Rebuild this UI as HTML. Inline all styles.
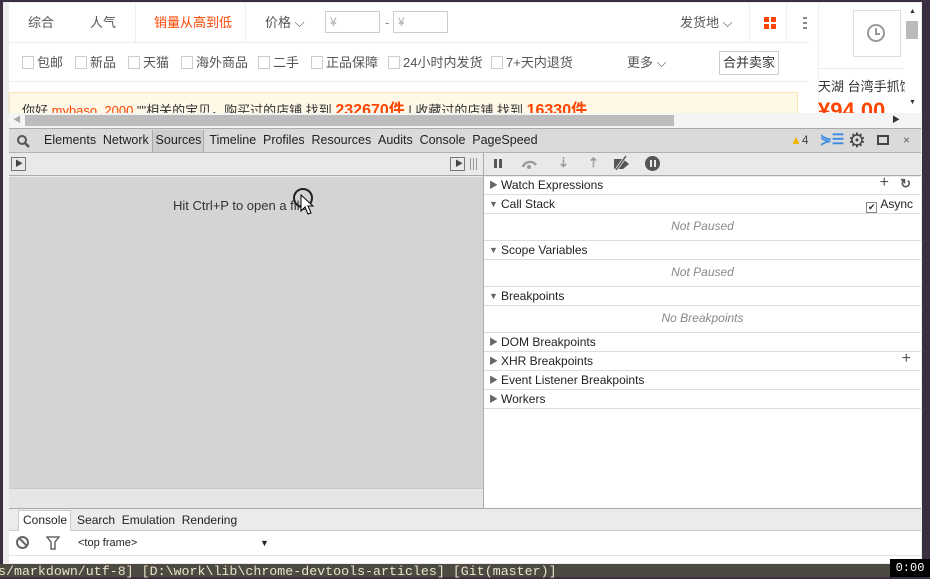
<!DOCTYPE html>
<html><head><meta charset="utf-8"><style>
*{box-sizing:border-box;margin:0;padding:0}
body{width:930px;height:577px;overflow:hidden;background:#3a2f40;font-family:"Liberation Sans","Noto Sans CJK SC",sans-serif;font-size:12px;color:#222;position:relative}
.a{position:absolute}
.win{left:3px;top:2px;width:919px;height:562px;background:#ececec}
.cn{font-family:"Liberation Sans","Noto Sans CJK SC",sans-serif}
.cb{display:inline-block;width:12px;height:13px;border:1px solid #ccc;background:#fff;vertical-align:-2px;margin-right:3px}
.row{position:absolute;left:484px;width:437px;height:19px;border-bottom:1px solid #ddd;font-size:12px;line-height:18px;padding-left:17px;color:#222}
.tri{position:absolute;left:5px;top:0;font-size:9px;color:#666}
.np{position:absolute;left:484px;width:437px;height:27px;border-bottom:1px solid #ddd;text-align:center;font-style:italic;color:#888;line-height:25px}
.dt span{margin-right:6.8px}
</style></head><body>
<div class="a win"></div>
<!-- page area -->
<div class="a" style="left:9px;top:3px;width:912px;height:125px;background:#fff"></div>
<div class="a cn" style="left:9px;top:3px;width:800px;height:40px;border-bottom:1px solid #eee;font-size:13px;line-height:39px;color:#555">
 <span class="a" style="left:19px">综合</span><span class="a" style="left:81px">人气</span>
 <span class="a" style="left:126px;width:1px;height:40px;background:#eee"></span>
 <span class="a" style="left:145px;color:#f40">销量从高到低</span>
 <span class="a" style="left:236px;width:1px;height:40px;background:#eee"></span>
 <span class="a" style="left:256px">价格 ⌵</span>
 <span class="a" style="left:316px;top:8px;width:55px;height:22px;border:1px solid #ccc;line-height:20px;padding-left:4px;color:#aaa;font-size:12px">¥</span>
 <span class="a" style="left:376px;color:#888">-</span>
 <span class="a" style="left:384px;top:8px;width:55px;height:22px;border:1px solid #ccc;line-height:20px;padding-left:4px;color:#aaa;font-size:12px">¥</span>
 <span class="a" style="left:671px">发货地 ⌵</span>
 <span class="a" style="left:740px;width:1px;height:40px;background:#eee"></span>
 <span class="a" style="left:755px;top:14px;width:12px;height:12px;background:
 linear-gradient(#f40,#f40) 0 0/5px 5px no-repeat,linear-gradient(#f40,#f40) 7px 0/5px 5px no-repeat,linear-gradient(#f40,#f40) 0 7px/5px 5px no-repeat,linear-gradient(#f40,#f40) 7px 7px/5px 5px no-repeat"></span>
 <span class="a" style="left:777px;width:1px;height:40px;background:#eee"></span>
 <span class="a" style="left:794px;top:14px;width:4px;height:12px;background:repeating-linear-gradient(#888 0 2px,transparent 2px 5px)"></span>
</div>
<div class="a cn" style="left:9px;top:44px;width:800px;height:38px;border-bottom:1px solid #eee;font-size:13px;line-height:38px;color:#555">
 <span class="a" style="left:13px"><i class="cb"></i>包邮</span>
 <span class="a" style="left:66px"><i class="cb"></i>新品</span>
 <span class="a" style="left:119px"><i class="cb"></i>天猫</span>
 <span class="a" style="left:172px"><i class="cb"></i>海外商品</span>
 <span class="a" style="left:249px"><i class="cb"></i>二手</span>
 <span class="a" style="left:302px"><i class="cb"></i>正品保障</span>
 <span class="a" style="left:379px"><i class="cb"></i>24小时内发货</span>
 <span class="a" style="left:482px"><i class="cb"></i>7+天内退货</span>
 <span class="a" style="left:618px">更多 ⌵</span>
 <span class="a" style="left:710px;top:7px;width:60px;height:24px;border:1px solid #ccc;line-height:22px;text-align:center;color:#333">合并卖家</span>
</div>
<div class="a cn" style="left:9px;top:92px;width:789px;height:22px;background:#fff8e6;border:1px solid #fde3b4;overflow:hidden;font-size:13px;line-height:36px;padding-left:12px;color:#333;white-space:nowrap">你好 <span style="color:#f40">mybaso_2000</span> ""相关的宝贝，购买过的店铺 找到 <b style="color:#f40;font-size:16px">232670件</b> | 收藏过的店铺 找到 <b style="color:#f40;font-size:16px">16330件</b></div>
<!-- right sidebar -->
<div class="a" style="left:818px;top:3px;width:1px;height:120px;background:#eee"></div>
<div class="a" style="left:819px;top:68px;width:85px;height:1px;background:#eee"></div>
<div class="a" style="left:853px;top:10px;width:48px;height:47px;border:1px solid #ddd"></div>
<div class="a" style="left:867px;top:24px;width:18px;height:18px;border:2px solid #999;border-radius:50%"></div>
<div class="a" style="left:875px;top:28px;width:2px;height:6px;background:#999"></div>
<div class="a" style="left:875px;top:33px;width:5px;height:2px;background:#999"></div>
<div class="a cn" style="left:818px;top:76px;width:87px;overflow:hidden;font-size:13px;color:#333;white-space:nowrap">天湖 台湾手抓饼</div>
<div class="a" style="left:818px;top:98px;width:80px;height:15px;overflow:hidden;font-size:22px;font-weight:bold;color:#f40;line-height:26px">¥94.00</div>
<div class="a" style="left:905px;top:3px;width:16px;height:110px;background:#fff"></div>
<div class="a" style="left:909px;top:8px;font-size:7px;color:#333">▲</div>
<div class="a" style="left:906px;top:21px;width:12px;height:18px;background:#bbb"></div>
<div class="a" style="left:909px;top:99px;font-size:7px;color:#333">▼</div>
<!-- h scrollbar -->
<div class="a" style="left:9px;top:113px;width:912px;height:15px;background:#f4f4f4"></div>
<div class="a" style="left:25px;top:115px;width:649px;height:11px;background:#bcbcbc"></div>
<div class="a" style="left:13px;top:114px;font-size:8px;color:#aaa">◀</div>
<div class="a" style="left:892px;top:114px;font-size:8px;color:#333">▶</div>
<!-- devtools toolbar -->
<div class="a" style="left:9px;top:128px;width:912px;height:25px;background:#dadada;border-top:1px solid #aaa;border-bottom:1px solid #b3b3b3"></div>
<svg class="a" style="left:16px;top:134px" width="15" height="15"><circle cx="6" cy="6" r="4" fill="none" stroke="#555" stroke-width="2"/><path d="M9 9l4 4" stroke="#555" stroke-width="2.5"/></svg>
<div class="a" style="left:152px;top:130px;width:52px;height:22px;background:#cdcdcd;border-left:1px solid #aaa;border-right:1px solid #aaa"></div>
<div class="a dt" style="left:44px;top:133px;font-size:12.5px;color:#222;white-space:nowrap"><span>Elements</span><span>Network</span><span style="margin-right:8px">Sources</span><span>Timeline</span><span>Profiles</span><span>Resources</span><span>Audits</span><span>Console</span><span>PageSpeed</span></div>
<div class="a" style="left:790px;top:133px;font-size:12px;color:#444"><span style="color:#f0b400">▲</span>4</div>
<div class="a" style="left:820px;top:131px;font-size:14px;color:#3a8be0;font-weight:bold">⋟☰</div>
<div class="a" style="left:848px;top:128px;font-size:20px;color:#444">⚙</div>
<div class="a" style="left:877px;top:135px;width:12px;height:10px;border:2px solid #444"></div>
<div class="a" style="left:903px;top:133px;font-size:12px;color:#666">×</div>
<!-- second row -->
<div class="a" style="left:9px;top:153px;width:912px;height:23px;background:#e9e9e9;border-bottom:1px solid #aaa"></div>
<div class="a" style="left:483px;top:153px;width:1px;height:356px;background:#aaa"></div>
<div class="a" style="left:11px;top:157px;width:15px;height:14px;border:1px solid #777;font-size:8px;line-height:12px;padding-left:3px;color:#444">▶</div>
<div class="a" style="left:450px;top:157px;width:15px;height:14px;border:1px solid #777;font-size:8px;line-height:12px;padding-left:4px;color:#444">▶</div>
<div class="a" style="left:470px;top:158px;width:7px;height:12px;background:repeating-linear-gradient(90deg,#999 0 1px,transparent 1px 3px)"></div>
<div class="a" style="left:494px;top:159px;width:3px;height:9px;background:#555"></div><div class="a" style="left:499px;top:159px;width:3px;height:9px;background:#555"></div>
<svg class="a" style="left:520px;top:156px" width="20" height="14"><path d="M3 11a7 6 0 0 1 13-2" fill="none" stroke="#999" stroke-width="2.5"/><circle cx="9" cy="11" r="2" fill="#999"/></svg>
<div class="a" style="left:558px;top:155px;font-size:13px;color:#999;font-weight:bold">⇣</div>
<div class="a" style="left:588px;top:155px;font-size:13px;color:#999;font-weight:bold">⇡</div>
<svg class="a" style="left:612px;top:155px" width="20" height="16"><path d="M2 4h9l6 5-6 5H2z" fill="#555"/><path d="M4 15L14 1" stroke="#e9e9e9" stroke-width="3"/><path d="M4 15L14 1" stroke="#555" stroke-width="1.5"/></svg>
<div class="a" style="left:645px;top:156px;width:15px;height:15px;border-radius:50%;background:#555"></div>
<div class="a" style="left:650px;top:160px;width:2px;height:7px;background:#e9e9e9"></div><div class="a" style="left:654px;top:160px;width:2px;height:7px;background:#e9e9e9"></div>
<!-- left panel -->
<div class="a" style="left:9px;top:177px;width:474px;height:311px;background:#d4d4d4"></div>
<div class="a" style="left:9px;top:488px;width:474px;height:20px;background:#e6e6e6;border-top:1px solid #c8c8c8"></div>
<div class="a" style="left:173px;top:198px;font-size:13px;color:#333">Hit Ctrl+P to open a file</div>
<div class="a" style="left:293px;top:188px;width:20px;height:20px;border:2px solid #222;border-radius:50%"></div>
<svg class="a" style="left:300px;top:194px" width="14" height="22"><path d="M1 1v16l4-4 3 7 3-1-3-7h5z" fill="#fff" stroke="#000"/></svg>
<!-- right panel -->
<div class="a" style="left:484px;top:177px;width:437px;height:331px;background:#fff"></div>
<div class="row" style="top:176px"><span class="tri">▶</span>Watch Expressions<span class="a" style="right:32px;top:-2px;font-size:16px;color:#555">+</span><span class="a" style="right:10px;top:-1px;font-size:13px;color:#555;font-weight:bold">↻</span></div>
<div class="row" style="top:195px"><span class="tri">▼</span>Call Stack<span class="a" style="right:8px;top:0"><i class="cb" style="width:11px;height:11px;border-color:#888;font-size:9px;line-height:9px;font-style:normal;text-align:center">✔</i>Async</span></div>
<div class="np" style="top:214px">Not Paused</div>
<div class="row" style="top:241px"><span class="tri">▼</span>Scope Variables</div>
<div class="np" style="top:260px">Not Paused</div>
<div class="row" style="top:287px"><span class="tri">▼</span>Breakpoints</div>
<div class="np" style="top:306px">No Breakpoints</div>
<div class="row" style="top:333px"><span class="tri">▶</span>DOM Breakpoints</div>
<div class="row" style="top:352px"><span class="tri">▶</span>XHR Breakpoints<span class="a" style="right:10px;top:-2px;font-size:16px;color:#555">+</span></div>
<div class="row" style="top:371px"><span class="tri">▶</span>Event Listener Breakpoints</div>
<div class="row" style="top:390px"><span class="tri">▶</span>Workers</div>
<!-- drawer -->
<div class="a" style="left:9px;top:508px;width:912px;height:23px;background:#ebebeb;border-top:1px solid #aaa;border-bottom:1px solid #ccc"></div>
<div class="a" style="left:18px;top:510px;width:53px;height:21px;background:#fff;border:1px solid #ccc;border-bottom:none"></div>
<div class="a" style="left:23px;top:513px;font-size:12px;color:#222;white-space:nowrap">Console&nbsp;&nbsp;&nbsp;Search&nbsp;&nbsp;Emulation&nbsp;&nbsp;Rendering</div>
<div class="a" style="left:9px;top:531px;width:912px;height:32px;background:#fff"></div>
<div class="a" style="left:9px;top:555px;width:912px;height:1px;background:#e4e4e4"></div>
<div class="a" style="left:16px;top:536px;width:13px;height:13px;border:2px solid #666;border-radius:50%"></div>
<div class="a" style="left:18px;top:541px;width:10px;height:2px;background:#666;transform:rotate(45deg)"></div>
<svg class="a" style="left:46px;top:536px" width="14" height="14"><path d="M1 1h12l-4 5v7H5V6z" fill="none" stroke="#666" stroke-width="1.5"/></svg>
<div class="a" style="left:78px;top:537px;font-size:11px;color:#222">&lt;top frame&gt;</div>
<div class="a" style="left:260px;top:538px;font-size:9px;color:#222">▼</div>
<!-- bottom terminal -->
<div class="a" style="left:0;top:564px;width:930px;height:13px;background:#4c4a40"></div>
<div class="a" style="left:-2px;top:564px;font-family:'Liberation Mono',monospace;font-size:13.3px;line-height:15px;color:#e8e2c8;white-space:nowrap">s/markdown/utf-8] [D:\work\lib\chrome-devtools-articles] [Git(master)]</div>
<div class="a" style="left:890px;top:559px;width:40px;height:18px;background:#000;color:#fff;font-family:'Liberation Mono',monospace;font-size:12px;line-height:18px;text-align:center">0:00</div>
</body></html>
